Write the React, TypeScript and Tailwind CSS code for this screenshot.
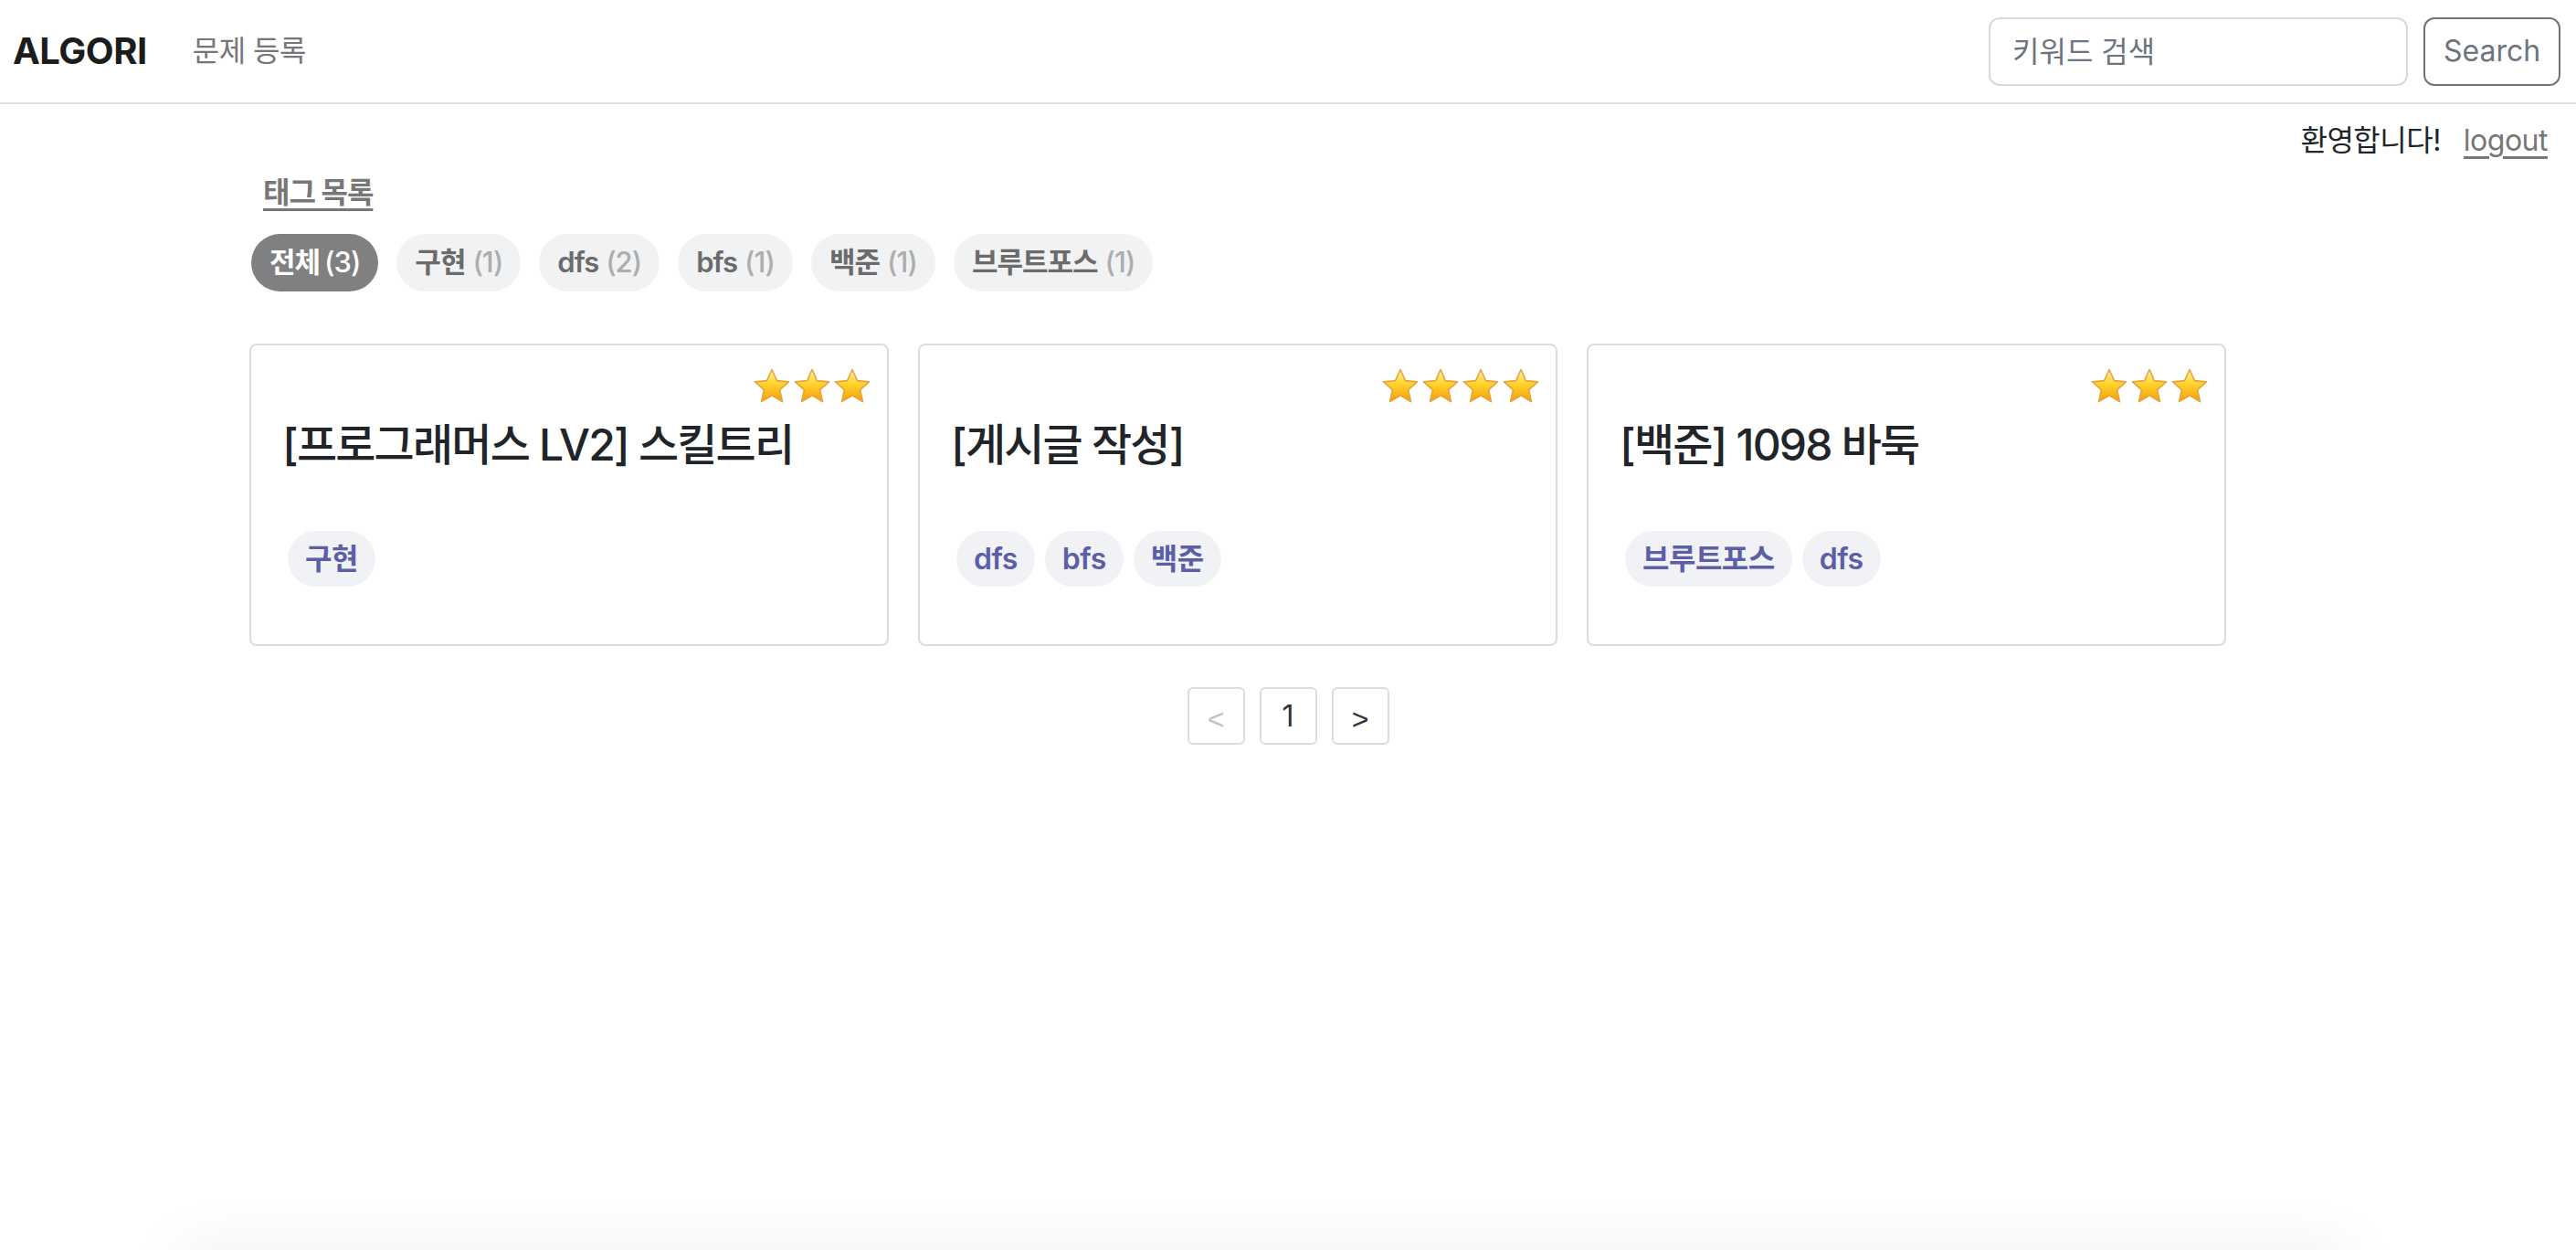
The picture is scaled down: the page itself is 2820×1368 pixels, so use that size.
import React from 'react';

type Problem = { title: string; stars: number; tags: string[] };

const tagFilters = [
    { name: '전체', count: 3, active: true },
    { name: '구현', count: 1 },
    { name: 'dfs', count: 2 },
    { name: 'bfs', count: 1 },
    { name: '백준', count: 1 },
    { name: '브루트포스', count: 1 },
];

const problems: Problem[] = [
    { title: '[프로그래머스 LV2] 스킬트리', stars: 3, tags: ['구현'] },
    { title: '[게시글 작성]', stars: 4, tags: ['dfs', 'bfs', '백준'] },
    { title: '[백준] 1098 바둑', stars: 3, tags: ['브루트포스', 'dfs'] },
];

const Star: React.FC = () => (
    <svg width="44" height="44" viewBox="0 0 44 44">
        <defs>
            <linearGradient id="starFill" x1="0" y1="0" x2="0" y2="1">
                <stop offset="0" stopColor="#fff6a8" />
                <stop offset="0.45" stopColor="#ffd42a" />
                <stop offset="1" stopColor="#f59e0b" />
            </linearGradient>
        </defs>
        <path
            d="M22 3.5l5.4 12.1 13.1 1.3-9.9 8.8 2.9 12.9L22 31.9l-11.5 6.7 2.9-12.9-9.9-8.8 13.1-1.3z"
            fill="url(#starFill)"
            stroke="#e9a23b"
            strokeWidth="1.6"
            strokeLinejoin="round"
        />
    </svg>
);

const Header: React.FC = () => (
    <header className="h-[114px] border-b-2 border-[#dfdfe3] flex items-center justify-between pl-[14px] pr-[17px]">
        <div className="flex items-center">
            <a className="text-[40px] font-bold text-[#1c1c1c] tracking-[-0.5px]">ALGORI</a>
            <a className="ml-[50px] text-[32px] text-[#767676] tracking-[-0.5px]">문제 등록</a>
        </div>
        <div className="flex items-center gap-[17px]">
            <input
                placeholder="키워드 검색"
                className="w-[459px] h-[75px] border-2 border-[#d6d9dd] rounded-[12px] px-[24px] text-[32px] text-[#212529] placeholder:text-[#6c757d] outline-none"
            />
            <button className="w-[150px] h-[75px] border-2 border-[#6c757d] rounded-[12px] text-[32px] text-[#6c757d]">Search</button>
        </div>
    </header>
);

const App: React.FC = () => {
    return (
        <div className="min-h-screen bg-white font-['Inter','Noto_Sans_CJK_KR',sans-serif] text-[#212529]">
            <Header />

            <div className="flex justify-end items-center h-[48px] mt-[16px] pr-[31px] text-[32px] tracking-[-0.5px]">
                <span className="text-[#212529]">환영합니다!</span>
                <a className="ml-[25px] text-[#777] underline underline-offset-[6px]">logout</a>
            </div>

            <main className="pl-[275px]">
                <div className="mt-[9px] pl-[13px] h-[48px] flex items-center">
                    <span className="text-[32px] font-bold text-[#777] underline underline-offset-[6px] tracking-[-1px]">태그 목록</span>
                </div>

                <div className="mt-[21px] flex gap-[20px]">
                    {tagFilters.map(t => (
                        <button
                            key={t.name}
                            className={`h-[63px] px-[20px] rounded-full text-[31px] font-semibold tracking-[-1px] flex items-center ${t.active ? 'bg-[#808080] text-white' : 'bg-[#f1f2f4] text-[#6b6b6b]'}`}
                        >
                            {t.name}
                            <span className={`font-medium ${t.active ? 'ml-[5px] text-white' : 'ml-[8px] text-[#adadad]'}`}>({t.count})</span>
                        </button>
                    ))}
                </div>

                <div className="mt-[57px] flex gap-[32px] -ml-[2px]">
                    {problems.map(p => (
                        <div key={p.title} className="w-[700px] h-[331px] border-2 border-[#dcdcdc] rounded-[8px] pt-[25px]">
                            <div className="h-[40px] flex justify-end pr-[16px] items-center">
                                {Array.from({ length: p.stars }).map((_, i) => (
                                    <Star key={i} />
                                ))}
                            </div>
                            <h4 className="mt-[15px] pl-[34px] text-[48px] leading-[58px] font-medium tracking-[-1.8px] text-[#212529]">{p.title}</h4>
                            <div className="mt-[65px] pl-[40px] flex gap-[11px]">
                                {p.tags.map(tag => (
                                    <span key={tag} className="h-[61px] px-[19px] rounded-full bg-[#f1f2f6] text-[32px] font-semibold tracking-[-0.5px] text-[#5c5fa6] flex items-center">
                                        {tag}
                                    </span>
                                ))}
                            </div>
                        </div>
                    ))}
                </div>
            </main>

            <nav className="mt-[45px] flex justify-center gap-[16px]">
                <button className="w-[63px] h-[63px] border-2 border-[#dcdcdc] rounded-[6px] text-[32px] text-[#c2c2c2] font-['Liberation_Sans',sans-serif] pt-[6px]">&lt;</button>
                <button className="w-[63px] h-[63px] border-2 border-[#dcdcdc] rounded-[6px] text-[32px] text-[#333]">1</button>
                <button className="w-[63px] h-[63px] border-2 border-[#dcdcdc] rounded-[6px] text-[32px] text-[#333] font-['Liberation_Sans',sans-serif] pt-[6px]">&gt;</button>
            </nav>

            <div className="fixed left-[200px] right-[250px] bottom-[-60px] h-[60px] shadow-[0_0_70px_rgba(0,0,0,0.07)]" />
        </div>
    );
};

export default App;
